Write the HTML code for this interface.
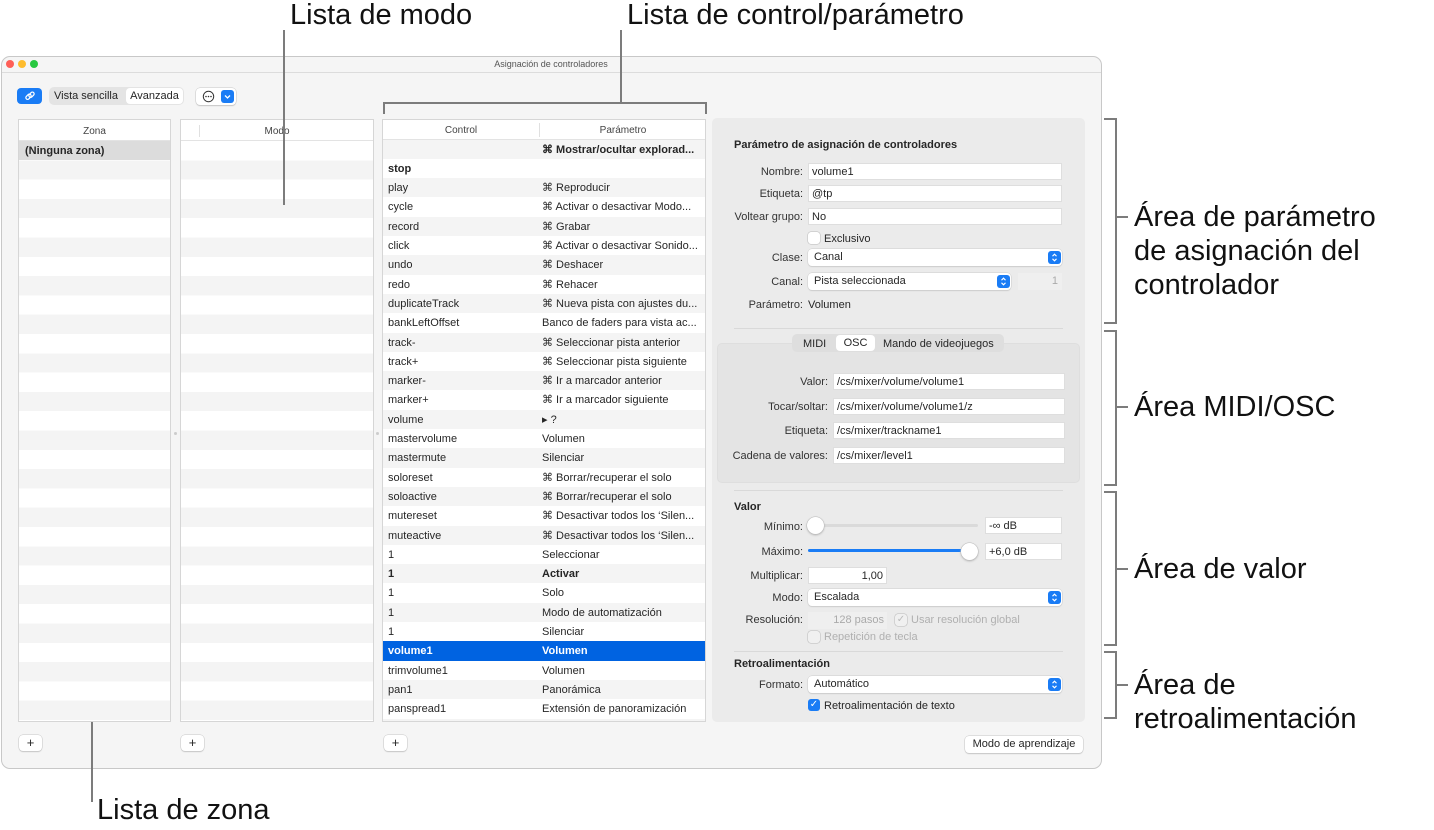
<!DOCTYPE html>
<html><head><meta charset="utf-8">
<style>
*{box-sizing:border-box;margin:0;padding:0}
body{width:1434px;height:830px;background:#fff;position:relative;overflow:hidden;font-family:"Liberation Sans",sans-serif;font-size:11px;color:#262626}
.a{position:absolute}
.ann{position:absolute;font-size:29px;color:#111;line-height:34px;white-space:nowrap;z-index:5}
.ln{position:absolute;background:#7c7c7c;z-index:5}
.win{left:1px;top:56px;width:1101px;height:713px;background:#f5f5f5;border:1px solid #c8c8c8;border-radius:9px}
.list{position:absolute;background:#fff;border:1px solid #d6d6d6;overflow:hidden}
.hdr{position:absolute;left:0;right:0;top:0;height:21px;background:#fff;border-bottom:1px solid #e3e3e3;font-size:10px;color:#444;text-align:center;line-height:23px}
.stripes{position:absolute;left:0;right:0;top:21px;bottom:0;background:repeating-linear-gradient(#fff 0,#fff 19.3px,#f4f4f4 19.3px,#f4f4f4 38.6px)}
.row{position:absolute;left:0;right:0;height:19.3px;line-height:21px;font-size:11px}
.row span{position:absolute;white-space:nowrap}
.row .c1{left:5px}.row .c2{left:159px}
.g{background:#f4f4f4}
.b{font-weight:bold}
.sel{background:#0063e1;color:#fff;font-weight:bold}
.lbl{position:absolute;text-align:right;white-space:nowrap;font-size:11px;color:#333}
.fld{position:absolute;background:#fff;border:1px solid #dedede;height:17px;line-height:16px;padding-left:3px;font-size:11px;white-space:nowrap}
.pop{position:absolute;background:#fff;border-radius:4px;box-shadow:0 0 0 .5px #ccc,0 1px 1px #ccc;height:17px;line-height:17px;padding-left:6px;font-size:11px}
.step{position:absolute;right:1px;top:2px;width:13px;height:13px;background:#1a7cf5;border-radius:3px}
.btn{position:absolute;background:#fff;border-radius:4px;box-shadow:0 0 0 .5px #c6c6c6,0 1px 1px #c6c6c6;text-align:center;font-size:11px}
.cb{position:absolute;width:12px;height:12px;border-radius:3px;background:#fff;box-shadow:0 0 0 .5px #b8b8b8}
.sep{position:absolute;height:1px;background:#d9d9d9}
</style></head><body>

<!-- window -->
<div class="a win"></div>
<div class="a" style="left:6px;top:60px;width:8px;height:8px;border-radius:50%;background:#fe5f57"></div>
<div class="a" style="left:18px;top:60px;width:8px;height:8px;border-radius:50%;background:#febc2e"></div>
<div class="a" style="left:30px;top:60px;width:8px;height:8px;border-radius:50%;background:#28c840"></div>
<div class="a" style="left:400px;top:59px;width:302px;text-align:center;font-size:9px;color:#555">Asignación de controladores</div>
<div class="a" style="left:2px;top:72px;width:1099px;height:1px;background:#dcdcdc"></div>

<!-- toolbar -->
<div class="a" style="left:17px;top:88px;width:25px;height:16px;background:#1a7cf5;border-radius:4px;text-align:center">
<svg width="12" height="12" viewBox="0 0 12 12" style="margin-top:2px"><g fill="none" stroke="#fff" stroke-width="1.2"><rect x="1.5" y="5" width="6" height="3.5" rx="1.7" transform="rotate(-45 4.5 6.75)"/><rect x="4.5" y="3" width="6" height="3.5" rx="1.7" transform="rotate(-45 7.5 4.75)"/></g></svg></div>
<div class="a" style="left:49px;top:87px;width:135px;height:18px;background:#e4e4e4;border-radius:5px"></div>
<div class="a" style="left:54px;top:87px;height:18px;line-height:18px;font-size:11px">Vista sencilla</div>
<div class="a" style="left:126px;top:88px;width:57px;height:16px;background:#fff;border-radius:4px;line-height:16px;text-align:center;font-size:11px">Avanzada</div>
<div class="btn" style="left:196px;top:88px;width:40px;height:17px"></div>
<svg class="a" style="left:202px;top:90px" width="13" height="13" viewBox="0 0 13 13"><circle cx="6.5" cy="6.5" r="5.2" fill="none" stroke="#333" stroke-width="1"/><circle cx="4" cy="6.5" r=".8" fill="#333"/><circle cx="6.5" cy="6.5" r=".8" fill="#333"/><circle cx="9" cy="6.5" r=".8" fill="#333"/></svg>
<svg class="a" style="left:221px;top:90px" width="13" height="13" viewBox="0 0 13 13"><rect width="13" height="13" rx="3" fill="#1a7cf5"/><path d="M4 5.5l2.5 2.5 2.5-2.5" fill="none" stroke="#fff" stroke-width="1.3"/></svg>

<!-- zona list -->
<div class="list" style="left:18px;top:119px;width:153px;height:603px">
<div class="stripes"></div>
<div class="hdr">Zona</div>
<div class="row b" style="top:21px;background:#dcdcdc"><span style="left:6px">(Ninguna zona)</span></div>
</div>
<!-- modo list -->
<div class="list" style="left:180px;top:119px;width:194px;height:603px">
<div class="stripes"></div>
<div class="hdr">Modo</div>
<div class="a" style="left:18px;top:5px;width:1px;height:12px;background:#e0e0e0"></div>
</div>
<div class="a" style="left:174px;top:432px;width:3px;height:3px;border-radius:50%;background:#ccc"></div>
<div class="a" style="left:376px;top:432px;width:3px;height:3px;border-radius:50%;background:#ccc"></div>

<!-- control list -->
<div class="list" style="left:382px;top:119px;width:324px;height:603px">
<div class="hdr" style="height:20px;line-height:22px"><span class="a" style="left:0;width:156px;text-align:center">Control</span><span class="a" style="left:156px;top:3px;width:1px;height:14px;background:#e0e0e0"></span><span class="a" style="left:157px;width:166px;text-align:center">Parámetro</span></div>
<div class="row g b" style="top:19.5px"><span class="c2">⌘ Mostrar/ocultar explorad...</span></div>
<div class="row b" style="top:38.8px"><span class="c1">stop</span></div>
<div class="row g" style="top:58.1px"><span class="c1">play</span><span class="c2">⌘ Reproducir</span></div>
<div class="row" style="top:77.4px"><span class="c1">cycle</span><span class="c2">⌘ Activar o desactivar Modo...</span></div>
<div class="row g" style="top:96.7px"><span class="c1">record</span><span class="c2">⌘ Grabar</span></div>
<div class="row" style="top:116px"><span class="c1">click</span><span class="c2">⌘ Activar o desactivar Sonido...</span></div>
<div class="row g" style="top:135.3px"><span class="c1">undo</span><span class="c2">⌘ Deshacer</span></div>
<div class="row" style="top:154.6px"><span class="c1">redo</span><span class="c2">⌘ Rehacer</span></div>
<div class="row g" style="top:173.9px"><span class="c1">duplicateTrack</span><span class="c2">⌘ Nueva pista con ajustes du...</span></div>
<div class="row" style="top:193.2px"><span class="c1">bankLeftOffset</span><span class="c2">Banco de faders para vista ac...</span></div>
<div class="row g" style="top:212.5px"><span class="c1">track-</span><span class="c2">⌘ Seleccionar pista anterior</span></div>
<div class="row" style="top:231.8px"><span class="c1">track+</span><span class="c2">⌘ Seleccionar pista siguiente</span></div>
<div class="row g" style="top:251.1px"><span class="c1">marker-</span><span class="c2">⌘ Ir a marcador anterior</span></div>
<div class="row" style="top:270.4px"><span class="c1">marker+</span><span class="c2">⌘ Ir a marcador siguiente</span></div>
<div class="row g" style="top:289.7px"><span class="c1">volume</span><span class="c2">▸ ?</span></div>
<div class="row" style="top:309px"><span class="c1">mastervolume</span><span class="c2">Volumen</span></div>
<div class="row g" style="top:328.3px"><span class="c1">mastermute</span><span class="c2">Silenciar</span></div>
<div class="row" style="top:347.6px"><span class="c1">soloreset</span><span class="c2">⌘ Borrar/recuperar el solo</span></div>
<div class="row g" style="top:366.9px"><span class="c1">soloactive</span><span class="c2">⌘ Borrar/recuperar el solo</span></div>
<div class="row" style="top:386.2px"><span class="c1">mutereset</span><span class="c2">⌘ Desactivar todos los ‘Silen...</span></div>
<div class="row g" style="top:405.5px"><span class="c1">muteactive</span><span class="c2">⌘ Desactivar todos los ‘Silen...</span></div>
<div class="row" style="top:424.8px"><span class="c1">1</span><span class="c2">Seleccionar</span></div>
<div class="row g b" style="top:444.1px"><span class="c1">1</span><span class="c2">Activar</span></div>
<div class="row" style="top:463.4px"><span class="c1">1</span><span class="c2">Solo</span></div>
<div class="row g" style="top:482.7px"><span class="c1">1</span><span class="c2">Modo de automatización</span></div>
<div class="row" style="top:502px"><span class="c1">1</span><span class="c2">Silenciar</span></div>
<div class="row sel" style="top:521.3px"><span class="c1">volume1</span><span class="c2">Volumen</span></div>
<div class="row" style="top:540.6px"><span class="c1">trimvolume1</span><span class="c2">Volumen</span></div>
<div class="row g" style="top:559.9px"><span class="c1">pan1</span><span class="c2">Panorámica</span></div>
<div class="row" style="top:579.2px"><span class="c1">panspread1</span><span class="c2">Extensión de panoramización</span></div>
<div class="row g" style="top:598.5px"></div>
</div>

<!-- plus buttons -->
<div class="btn" style="left:19px;top:735px;width:23px;height:16px;line-height:15px;font-size:13px">+</div>
<div class="btn" style="left:181px;top:735px;width:23px;height:16px;line-height:15px;font-size:13px">+</div>
<div class="btn" style="left:384px;top:735px;width:23px;height:16px;line-height:15px;font-size:13px">+</div>
<div class="btn" style="left:965px;top:736px;width:118px;height:17px;line-height:17px">Modo de aprendizaje</div>

<!-- right panel -->
<div class="a" style="left:712px;top:118px;width:373px;height:604px;background:#ebebeb;border-radius:5px"></div>
<div class="a b" style="left:734px;top:139px;font-size:11px">Parámetro de asignación de controladores</div>
<div class="lbl" style="right:631px;top:166px">Nombre:</div><div class="fld" style="left:808px;top:163px;width:254px">volume1</div>
<div class="lbl" style="right:631px;top:188px">Etiqueta:</div><div class="fld" style="left:808px;top:185px;width:254px">@tp</div>
<div class="lbl" style="right:631px;top:211px">Voltear grupo:</div><div class="fld" style="left:808px;top:208px;width:254px">No</div>
<div class="cb" style="left:808px;top:232px"></div><div class="a" style="left:824px;top:233px">Exclusivo</div>
<div class="lbl" style="right:631px;top:252px">Clase:</div><div class="pop" style="left:808px;top:249px;width:254px">Canal<svg class="step" viewBox="0 0 13 13"><path d="M4.5 5.2l2-2 2 2M4.5 7.8l2 2 2-2" fill="none" stroke="#fff" stroke-width="1.1"/></svg></div>
<div class="lbl" style="right:631px;top:276px">Canal:</div><div class="pop" style="left:808px;top:273px;width:203px">Pista seleccionada<svg class="step" viewBox="0 0 13 13"><path d="M4.5 5.2l2-2 2 2M4.5 7.8l2 2 2-2" fill="none" stroke="#fff" stroke-width="1.1"/></svg></div>
<div class="a" style="left:1018px;top:273px;width:44px;height:17px;background:#efefef;color:#aaa;text-align:right;padding-right:4px;line-height:17px">1</div>
<div class="lbl" style="right:631px;top:299px">Parámetro:</div><div class="a" style="left:808px;top:299px">Volumen</div>
<div class="sep" style="left:734px;top:328px;width:329px"></div>

<div class="a" style="left:717px;top:343px;width:363px;height:140px;background:#e4e4e4;border-radius:5px;border:1px solid #dedede"></div>
<div class="a" style="left:792px;top:334px;width:212px;height:18px;background:#dedede;border-radius:5px"></div>
<div class="a" style="left:803px;top:338px">MIDI</div>
<div class="a" style="left:836px;top:335px;width:39px;height:16px;background:#fff;border-radius:4px;text-align:center;line-height:17px">OSC</div>
<div class="a" style="left:883px;top:338px">Mando de videojuegos</div>
<div class="lbl" style="right:606px;top:376px">Valor:</div><div class="fld" style="left:833px;top:373px;width:232px">/cs/mixer/volume/volume1</div>
<div class="lbl" style="right:606px;top:401px">Tocar/soltar:</div><div class="fld" style="left:833px;top:398px;width:232px">/cs/mixer/volume/volume1/z</div>
<div class="lbl" style="right:606px;top:425px">Etiqueta:</div><div class="fld" style="left:833px;top:422px;width:232px">/cs/mixer/trackname1</div>
<div class="lbl" style="right:606px;top:450px">Cadena de valores:</div><div class="fld" style="left:833px;top:447px;width:232px">/cs/mixer/level1</div>
<div class="sep" style="left:734px;top:490px;width:329px"></div>

<div class="a b" style="left:734px;top:501px">Valor</div>
<div class="lbl" style="right:631px;top:521px">Mínimo:</div>
<div class="a" style="left:808px;top:524px;width:170px;height:3px;background:#dadada;border-radius:2px"></div>
<div class="a" style="left:807px;top:517px;width:17px;height:17px;border-radius:50%;background:#fff;box-shadow:0 0 0 .5px #bbb,0 1px 2px #aaa"></div>
<div class="fld" style="left:985px;top:517px;width:77px">-∞ dB</div>
<div class="lbl" style="right:631px;top:546px">Máximo:</div>
<div class="a" style="left:808px;top:549px;width:162px;height:3px;background:#1a7cf5;border-radius:2px"></div>
<div class="a" style="left:961px;top:543px;width:17px;height:17px;border-radius:50%;background:#fff;box-shadow:0 0 0 .5px #bbb,0 1px 2px #aaa"></div>
<div class="fld" style="left:985px;top:543px;width:77px">+6,0 dB</div>
<div class="lbl" style="right:631px;top:570px">Multiplicar:</div><div class="fld" style="left:808px;top:567px;width:79px;text-align:right;padding-right:3px">1,00</div>
<div class="lbl" style="right:631px;top:592px">Modo:</div><div class="pop" style="left:808px;top:589px;width:254px">Escalada<svg class="step" viewBox="0 0 13 13"><path d="M4.5 5.2l2-2 2 2M4.5 7.8l2 2 2-2" fill="none" stroke="#fff" stroke-width="1.1"/></svg></div>
<div class="lbl" style="right:631px;top:614px">Resolución:</div>
<div class="a" style="left:808px;top:612px;width:79px;height:17px;background:#efefef;color:#aaa;text-align:right;padding-right:3px;line-height:17px">128 pasos</div>
<div class="cb" style="left:895px;top:614px;background:#f0f0f0;color:#bbb;font-size:10px;line-height:12px;text-align:center">✓</div>
<div class="a" style="left:911px;top:614px;color:#b0b0b0">Usar resolución global</div>
<div class="cb" style="left:808px;top:631px;background:#f0f0f0"></div>
<div class="a" style="left:824px;top:631px;color:#b0b0b0">Repetición de tecla</div>
<div class="sep" style="left:734px;top:651px;width:329px"></div>
<div class="a b" style="left:734px;top:658px">Retroalimentación</div>
<div class="lbl" style="right:631px;top:679px">Formato:</div><div class="pop" style="left:808px;top:676px;width:254px">Automático<svg class="step" viewBox="0 0 13 13"><path d="M4.5 5.2l2-2 2 2M4.5 7.8l2 2 2-2" fill="none" stroke="#fff" stroke-width="1.1"/></svg></div>
<div class="cb" style="left:808px;top:699px;background:#1a7cf5;box-shadow:none;color:#fff;font-size:10px;line-height:12px;text-align:center">✓</div>
<div class="a" style="left:824px;top:700px">Retroalimentación de texto</div>

<!-- annotations -->
<div class="ann" style="left:290px;top:-2px">Lista de modo</div>
<div class="ln" style="left:283px;top:30px;width:2px;height:175px"></div>
<div class="ann" style="left:627px;top:-2px">Lista de control/parámetro</div>
<div class="ln" style="left:620px;top:30px;width:2px;height:74px"></div>
<div class="ln" style="left:383px;top:102px;width:324px;height:2px"></div>
<div class="ln" style="left:383px;top:102px;width:2px;height:12px"></div>
<div class="ln" style="left:705px;top:102px;width:2px;height:12px"></div>
<div class="ann" style="left:97px;top:793px">Lista de zona</div>
<div class="ln" style="left:91px;top:722px;width:2px;height:80px"></div>

<div class="ln" style="left:1115px;top:118px;width:2px;height:206px"></div>
<div class="ln" style="left:1104px;top:118px;width:12px;height:2px"></div>
<div class="ln" style="left:1104px;top:322px;width:12px;height:2px"></div>
<div class="ln" style="left:1116px;top:216px;width:12px;height:2px"></div>
<div class="ann" style="left:1134px;top:200px">Área de parámetro<br>de asignación del<br>controlador</div>

<div class="ln" style="left:1115px;top:330px;width:2px;height:156px"></div>
<div class="ln" style="left:1104px;top:330px;width:12px;height:2px"></div>
<div class="ln" style="left:1104px;top:484px;width:12px;height:2px"></div>
<div class="ln" style="left:1116px;top:406px;width:12px;height:2px"></div>
<div class="ann" style="left:1134px;top:390px">Área MIDI/OSC</div>

<div class="ln" style="left:1115px;top:491px;width:2px;height:155px"></div>
<div class="ln" style="left:1104px;top:491px;width:12px;height:2px"></div>
<div class="ln" style="left:1104px;top:644px;width:12px;height:2px"></div>
<div class="ln" style="left:1116px;top:568px;width:12px;height:2px"></div>
<div class="ann" style="left:1134px;top:552px">Área de valor</div>

<div class="ln" style="left:1115px;top:651px;width:2px;height:68px"></div>
<div class="ln" style="left:1104px;top:651px;width:12px;height:2px"></div>
<div class="ln" style="left:1104px;top:717px;width:12px;height:2px"></div>
<div class="ln" style="left:1116px;top:684px;width:12px;height:2px"></div>
<div class="ann" style="left:1134px;top:668px">Área de<br>retroalimentación</div>
</body></html>
